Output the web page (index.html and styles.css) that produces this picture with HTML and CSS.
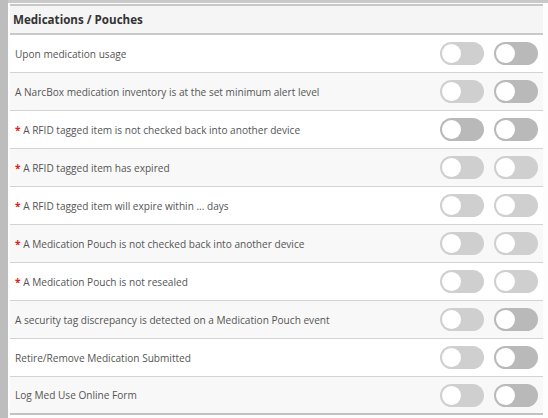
FILE: index.html
```html
<!DOCTYPE html>
<html>
<head>
<meta charset="utf-8">
<link rel="stylesheet" href="styles.css">
</head>
<body>
<div class="page">
  <div class="sidebar"></div>
  <div class="main">
    <div class="panel">
      <div class="header">Medications / Pouches</div>
      <div class="row"><span class="label">Upon medication usage</span><span class="toggles"><span class="tg light"></span><span class="tg dark"></span></span></div>
      <div class="row alt"><span class="label">A NarcBox medication inventory is at the set minimum alert level</span><span class="toggles"><span class="tg light"></span><span class="tg dark"></span></span></div>
      <div class="row"><span class="label"><span class="req">*</span> A RFID tagged item is not checked back into another device</span><span class="toggles"><span class="tg dark"></span><span class="tg dark"></span></span></div>
      <div class="row alt"><span class="label"><span class="req">*</span> A RFID tagged item has expired</span><span class="toggles"><span class="tg light"></span><span class="tg light"></span></span></div>
      <div class="row"><span class="label"><span class="req">*</span> A RFID tagged item will expire within ... days</span><span class="toggles"><span class="tg light"></span><span class="tg light"></span></span></div>
      <div class="row alt"><span class="label"><span class="req">*</span> A Medication Pouch is not checked back into another device</span><span class="toggles"><span class="tg light"></span><span class="tg light"></span></span></div>
      <div class="row"><span class="label"><span class="req">*</span> A Medication Pouch is not resealed</span><span class="toggles"><span class="tg light"></span><span class="tg light"></span></span></div>
      <div class="row alt"><span class="label">A security tag discrepancy is detected on a Medication Pouch event</span><span class="toggles"><span class="tg light"></span><span class="tg dark"></span></span></div>
      <div class="row"><span class="label">Retire/Remove Medication Submitted</span><span class="toggles"><span class="tg light"></span><span class="tg dark"></span></span></div>
      <div class="row alt last"><span class="label">Log Med Use Online Form</span><span class="toggles"><span class="tg light"></span><span class="tg dark"></span></span></div>
    </div>
  </div>
</div>
</body>
</html>
```
FILE: styles.css
```css
* { box-sizing: border-box; }
html, body { margin: 0; padding: 0; background: #fafafa; }
body { font-family: "Open Sans", "DejaVu Sans", sans-serif; color: #555; }
.page { display: flex; width: 548px; height: 418px; overflow: hidden; }
.sidebar { width: 8px; flex: none; background: #bdbdbd; }
.main { flex: 1; border-top: 3px solid #c9c9c9; padding: 1px 5px 0 2px; background: #fdfdfd; }
.panel { background: #fff; border-top: 2px solid #c8c8c8; }
.header {
  height: 29px;
  background: #f5f5f5;
  border-bottom: 2px solid #c9c9c9;
  font-weight: 700;
  font-size: 11.6px;
  color: #333;
  padding-left: 3px;
  display: flex;
  align-items: center;
  padding-bottom: 1px;
}
.row {
  height: 38px;
  display: flex;
  align-items: center;
  justify-content: space-between;
  border-bottom: 1px solid #d3d3d3;
  padding-left: 5px;
  padding-right: 5px;
  font-size: 10.1px;
}
.row.alt { background: #f8f8f8; }
.row.last { border-bottom: 2px solid #c2c2c2; }
.req { color: #d8251a; font-weight: 700; }
.toggles { display: flex; gap: 10px; }
.tg {
  position: relative;
  width: 44px;
  height: 23px;
  border-radius: 12px;
  background: #cfcfcf;
  display: block;
}
.tg.dark { background: #b9b9b9; }
.tg::after {
  content: "";
  position: absolute;
  left: 2px;
  top: 2px;
  width: 19px;
  height: 19px;
  border-radius: 50%;
  background: #fff;
  box-sizing: border-box;
}
```
